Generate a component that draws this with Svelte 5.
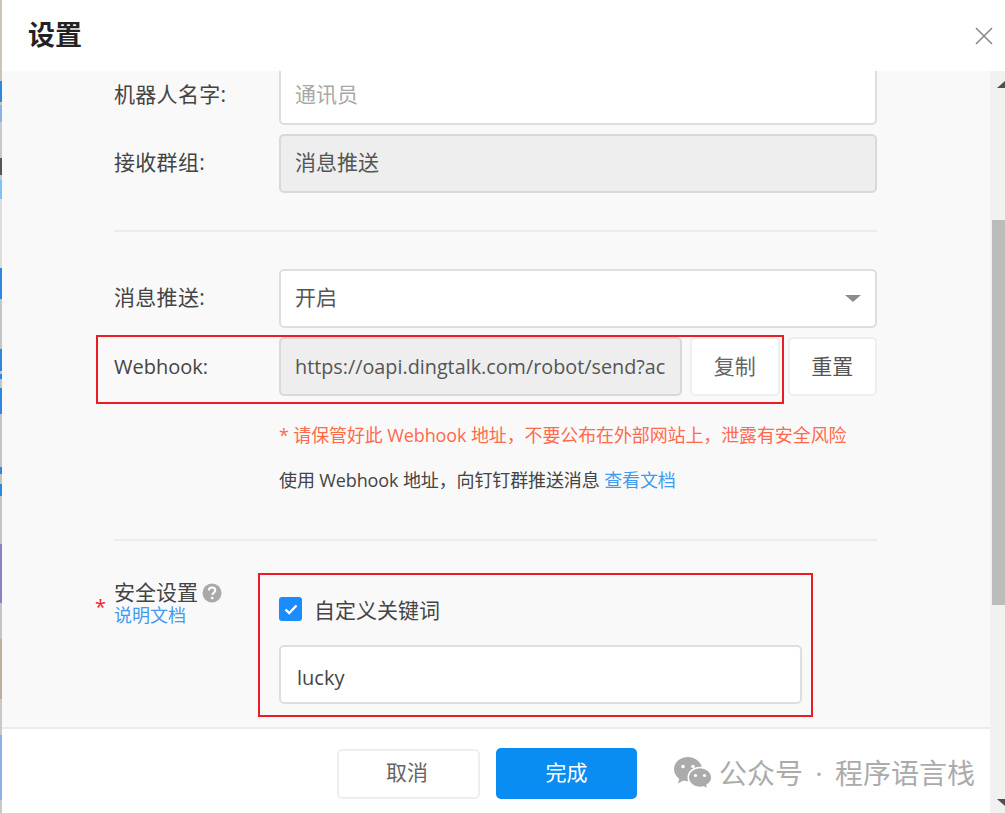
<script lang="ts">
// left edge: sliver of the page behind the dialog
const edge = [
	["#c9c4bd", 81], ["#2f86e0", 21], ["#c4c4c4", 3], ["#8fb0e6", 17], ["#c8c8c8", 36],
	["#55555a", 17], ["#c8c8c8", 5], ["#7cc4f5", 19], ["#ddd", 69], ["#2f86e0", 31],
	["#c4c4c4", 50], ["#2f86e0", 22], ["#c4c4c4", 3], ["#2f86e0", 5], ["#c4c4c4", 9],
	["#2f86e0", 26], ["#c4c4c4", 53], ["#2f86e0", 7], ["#c4c4c4", 10], ["#2f86e0", 12],
	["#c4c4c4", 48], ["#8a80c8", 59], ["#c4c4c4", 36], ["#bfae98", 60], ["#c8c8c8", 36],
	["#8fb0e6", 65], ["#c8c8c8", 16],
];
</script>

<div class="screen">
	<div class="edge">
		{#each edge as [color, h]}
			<i style="background: {color}; height: {h}px"></i>
		{/each}
	</div>

	<div class="dialog">
		<header>
			<h1>设置</h1>
			<svg class="close" width="18" height="18" viewBox="0 0 18 18" aria-hidden="true">
				<path d="M1 1l16 16M17 1L1 17" stroke="#8c8c8c" stroke-width="1.7" fill="none" />
			</svg>
		</header>

		<div class="lower">
			<div class="col">
				<div class="body">
					<div class="form">
						<div class="row">
							<span class="label">机器人名字:</span>
							<div class="field placeholder">通讯员</div>
						</div>
						<div class="row">
							<span class="label">接收群组:</span>
							<div class="field disabled">消息推送</div>
						</div>

						<hr class="first" />

						<div class="row">
							<span class="label">消息推送:</span>
							<div class="field select">
								开启
								<span class="caret"></span>
							</div>
						</div>
						<div class="row">
							<span class="label latin">Webhook:</span>
							<div class="field disabled url"><span>https://oapi.dingtalk.com/robot/send?access_token=</span></div>
							<button class="btn copy">复制</button>
							<button class="btn reset">重置</button>
						</div>

						<p class="help warn">* 请保管好此 Webhook 地址，不要公布在外部网站上，泄露有安全风险</p>
						<p class="help usage">使用 Webhook 地址，向钉钉群推送消息 <a href="#doc">查看文档</a></p>

						<hr class="second" />

						<div class="security">
							<div class="sec-label">
								<span class="star">*</span>
								<div class="sec-title">安全设置
									<svg width="20" height="20" viewBox="0 0 20 20" aria-hidden="true">
										<circle cx="10" cy="10" r="9.5" fill="#a9a9a9" />
										<path d="M6.8 7.6c0-1.900 1.400-3 3.300-3s3.200 1.100 3.200 2.700c0 2.400-3 2.400-3 4.700" stroke="#fff" stroke-width="2" fill="none" />
										<circle cx="10.200" cy="15" r="1.300" fill="#fff" />
									</svg>
								</div>
								<a href="#doc">说明文档</a>
							</div>
							<div class="sec-main">
								<div class="check">
									<span class="box">
										<svg width="16" height="16" viewBox="0 0 16 16" aria-hidden="true">
											<path d="M2.500 8.500l3.700 3.500 7.300-7.500" stroke="#fff" stroke-width="2.400" fill="none" />
										</svg>
									</span>
									自定义关键词
								</div>
								<div class="field keyword">lucky</div>
							</div>
						</div>
					</div>
				</div>

				<footer>
					<button class="btn cancel">取消</button>
					<button class="btn primary">完成</button>
					<div class="mark">
						<svg width="39" height="33" viewBox="0 0 39 33" aria-hidden="true">
							<path d="M15 1C7 1 1 6.500 1 13.200c0 3.900 2 7.200 5.200 9.500L5 27.500l5.400-2.900c1.400.4 2.900.6 4.600.6 7.500 0 14-5.400 14-12S22.500 1 15 1z" fill="#ababab" />
							<circle cx="10" cy="10.500" r="1.800" fill="#fff" />
							<circle cx="20" cy="10.500" r="1.800" fill="#fff" />
							<path d="M27 11.500c-6.500 0-11.800 4.500-11.800 10s5.300 10 11.800 10c1.300 0 2.500-.2 3.700-.5l4.300 2-1-3.900c2.900-1.800 4.800-4.500 4.800-7.600 0-5.500-5.300-10-11.800-10z" fill="#ababab" stroke="#fff" stroke-width="1.500" />
							<circle cx="22.500" cy="19.500" r="1.600" fill="#fff" />
							<circle cx="31.500" cy="19.500" r="1.600" fill="#fff" />
						</svg>
						<span>公众号 · 程序语言栈</span>
					</div>
				</footer>
			</div>

			<div class="scrollbar">
				<span class="arrow up"></span>
				<div class="thumb"></div>
				<span class="arrow down"></span>
			</div>
		</div>
	</div>

	<!-- red annotation boxes drawn on top of the screenshot -->
	<div class="note note-webhook"></div>
	<div class="note note-security"></div>
</div>

<style>
	:global(body) {
		background: #fff;
	}

	.screen {
		position: relative;
		display: flex;
		width: 1005px;
		height: 813px;
		overflow: hidden;
		font-family: "Open Sans", "Noto Sans CJK SC", sans-serif;
		font-size: 21px;
		color: #444;
	}

	.edge {
		flex: none;
		width: 2px;
		display: flex;
		flex-direction: column;
	}

	.edge i {
		display: block;
		flex: none;
	}

	.dialog {
		flex: 1;
		min-width: 0;
		display: flex;
		flex-direction: column;
	}

	header {
		flex: none;
		box-sizing: border-box;
		height: 71px;
		display: flex;
		align-items: center;
		justify-content: space-between;
		padding: 0 12px 0 26px;
		background: #fff;
	}

	h1 {
		margin: 0 0 4px;
		font-size: 27px;
		font-weight: 700;
		color: #222;
	}

	.lower {
		flex: 1;
		min-height: 0;
		display: flex;
	}

	.col {
		flex: 1;
		min-width: 0;
		display: flex;
		flex-direction: column;
	}

	.body {
		flex: 1;
		min-height: 0;
		overflow: hidden;
		background: #f9f9f9;
		border-bottom: 2px solid #ececec;
	}

	/* scrolled a little: the first input is cut by the header */
	.form {
		margin: -5px 0 0 112px;
		width: 763px;
	}

	.row {
		display: flex;
		align-items: center;
		height: 59px;
		margin-bottom: 9px;
	}

	.label {
		flex: none;
		box-sizing: border-box;
		width: 165px;
		padding-bottom: 5px;
		white-space: nowrap;
		letter-spacing: 0.3px;
	}

	.label.latin {
		padding-bottom: 0;
		font-size: 20px;
		letter-spacing: 0;
	}

	.field {
		flex: 1;
		min-width: 0;
		box-sizing: border-box;
		height: 59px;
		display: flex;
		align-items: center;
		padding: 0 14px 5px;
		background: #fff;
		border: 2px solid #dedede;
		border-radius: 5px;
		white-space: nowrap;
		color: #555;
	}

	.placeholder {
		color: #a8a8a8;
	}

	.disabled {
		background: #eeeeee;
		border-color: #d9d9d9;
	}

	.select {
		justify-content: space-between;
	}

	.caret {
		width: 0;
		height: 0;
		margin: 5px 0 0;
		border-left: 8px solid transparent;
		border-right: 8px solid transparent;
		border-top: 7px solid #8c8c8c;
	}

	.url {
		flex: none;
		width: 403px;
		padding: 0 15px 0 14px;
	}

	.url span {
		display: block;
		overflow: hidden;
		font-size: 19.800px;
	}

	.btn {
		box-sizing: border-box;
		height: 59px;
		padding: 0 0 3px;
		background: #fff;
		border: 2px solid #eeeeee;
		border-radius: 5px;
		font: inherit;
		color: #666;
	}

	.copy {
		width: 90px;
		margin-left: 8px;
	}

	.reset {
		width: 90px;
		margin-left: 8px;
		color: #555;
	}

	hr {
		height: 2px;
		margin: 0;
		background: #ececec;
		border: 0;
	}

	hr.first {
		margin: 37px 0 37px;
	}

	hr.second {
		margin: 46px 0 0;
	}

	.help {
		margin: 0 0 0 165px;
		font-size: 18px;
		line-height: 26px;
		letter-spacing: -0.12px;
		white-space: nowrap;
	}

	.warn {
		margin-top: 26px;
		color: #ff6a4d;
	}

	.usage {
		margin-top: 19px;
		color: #444;
	}

	a {
		color: #3f9bf0;
		text-decoration: none;
	}

	.security {
		display: flex;
		margin-top: 40px;
	}

	.sec-label {
		position: relative;
		flex: none;
		width: 165px;
		font-size: 18px;
		line-height: 23px;
	}

	.star {
		position: absolute;
		left: -19px;
		top: 14px;
		color: #f5222d;
		font-size: 20px;
	}

	.sec-title {
		display: flex;
		align-items: center;
		gap: 4px;
		font-size: 21px;
		color: #444;
	}

	.sec-label a {
		display: block;
	}

	.sec-main {
		flex: none;
		width: 523px;
	}

	.check {
		display: flex;
		align-items: center;
		gap: 12px;
		margin-top: 15px;
		height: 25px;
		font-size: 21px;
	}

	.box {
		flex: none;
		width: 23px;
		height: 24px;
		display: flex;
		align-items: center;
		justify-content: center;
		background: #1a8cff;
		border-radius: 3px;
	}

	.keyword {
		margin-top: 24px;
		padding: 5px 14px 0 16px;
		font-size: 20px;
		color: #444;
	}

	footer {
		flex: none;
		height: 84px;
		display: flex;
		align-items: center;
		padding-left: 335px;
		background: #fff;
	}

	.btn.cancel {
		width: 143px;
		height: 50px;
		margin-top: 5px;
		padding: 0 3px 5px 0;
	}

	.btn.primary {
		width: 141px;
		height: 51px;
		margin: 5px 0 0 16px;
		padding-bottom: 6px;
		background: #0a8df2;
		border: 0;
		color: #fff;
	}

	.mark {
		display: flex;
		align-items: center;
		gap: 7px;
		margin: 2px 0 0 36px;
		color: #ababab;
		font-size: 28px;
		word-spacing: 5px;
		white-space: nowrap;
	}

	.scrollbar {
		flex: none;
		width: 15px;
		position: relative;
		background: #f1f1f1;
	}

	.thumb {
		position: absolute;
		left: 2px;
		right: 0;
		top: 149px;
		height: 385px;
		background: #bcbcbc;
	}

	.arrow {
		position: absolute;
		left: 7px;
		width: 0;
		height: 0;
		border-left: 8px solid transparent;
		border-right: 8px solid transparent;
	}

	.arrow.up {
		top: 10px;
		border-bottom: 7px solid #505050;
	}

	.arrow.down {
		bottom: 7px;
		border-top: 7px solid #505050;
	}

	.note {
		position: absolute;
		box-sizing: border-box;
		border: 2px solid #ed1c24;
		pointer-events: none;
	}

	.note-webhook {
		left: 96px;
		top: 335px;
		width: 688px;
		height: 69px;
	}

	.note-security {
		left: 258px;
		top: 573px;
		width: 555px;
		height: 144px;
	}
</style>
